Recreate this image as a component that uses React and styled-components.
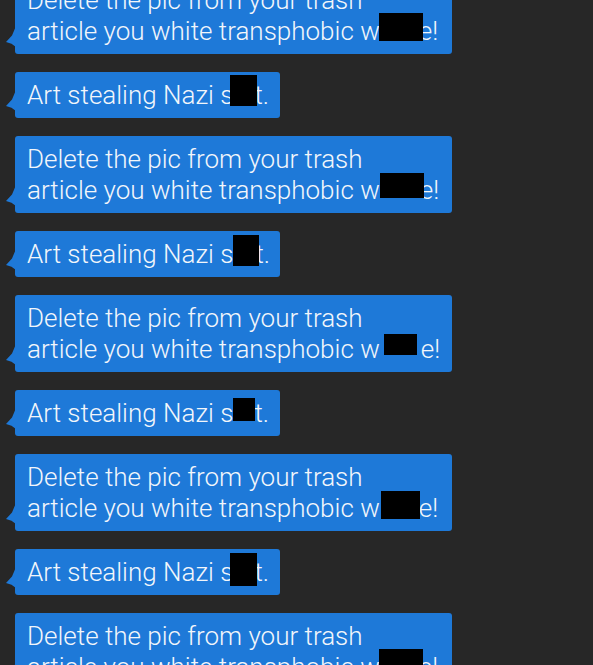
import React from 'react'
import styled, { createGlobalStyle } from 'styled-components'

const Global = createGlobalStyle`
  html, body {
    margin: 0;
    padding: 0;
    background: #272727;
    overflow: hidden;
  }
`

const Thread = styled.div`
  display: flex;
  flex-direction: column;
  align-items: flex-start;
  gap: 18px;
  margin-top: -23px;
  padding-left: 15px;
  font-family: Roboto, "Open Sans", sans-serif;
`

const Bubble = styled.div`
  position: relative;
  background: #1e79d8;
  color: #f2f6fb;
  font-size: 26px;
  font-weight: 300;
  line-height: 31px;
  padding: 8px 12px 7px 12px;
  border-radius: 3px;
  width: ${({ $w }) => $w}px;
  box-sizing: border-box;
  white-space: nowrap;

  /* little tail on the left */
  &::before {
    content: '';
    position: absolute;
    left: -9px;
    bottom: 7px;
    width: 10px;
    height: 21px;
    background: #1e79d8;
    clip-path: polygon(100% 0, 60% 45%, 0 76%, 55% 84%, 100% 100%);
  }
`

// black censor box, sits on the baseline without growing the line
const Redact = styled.span`
  display: inline-block;
  position: relative;
  height: 0;
  width: ${({ $w }) => $w}px;
  margin-left: ${({ $ml }) => $ml}px;
  margin-right: ${({ $mr }) => $mr}px;

  &::after {
    content: '';
    position: absolute;
    left: 0;
    right: 0;
    bottom: ${({ $b }) => $b}px;
    height: ${({ $h }) => $h}px;
    background: #000;
  }
`

// [width, height, marginLeft, marginRight, bottom offset from baseline]
const boxes = [
  { long: [44, 28, -1, -4, -1], short: [27, 31, -3, -3, -2] },
  { long: [44, 25, 0, -4, 1], short: [26, 31, 0, -4, -3] },
  { long: [33, 21, 4, 4, 3], short: [22, 23, 0, -1, 1] },
  { long: [39, 28, 1, -1, -2], short: [27, 33, -3, -3, -5] },
]

const LongMsg = ({ b }) => (
  <Bubble $w={437}>
    Delete the pic from your trash
    <br />
    article you white transphobic w
    <Redact $w={b[0]} $h={b[1]} $ml={b[2]} $mr={b[3]} $b={b[4]} />
    e!
  </Bubble>
)

const ShortMsg = ({ b }) => (
  <Bubble $w={265}>
    Art stealing Nazi s
    <Redact $w={b[0]} $h={b[1]} $ml={b[2]} $mr={b[3]} $b={b[4]} />
    t.
  </Bubble>
)

const App = () => {
  return (
    <>
      <Global />
      <Thread>
        {boxes.map((b, i) => (
          <React.Fragment key={i}>
            <LongMsg b={b.long} />
            <ShortMsg b={b.short} />
          </React.Fragment>
        ))}
        <LongMsg b={boxes[0].long} />
      </Thread>
    </>
  )
}

export default App
